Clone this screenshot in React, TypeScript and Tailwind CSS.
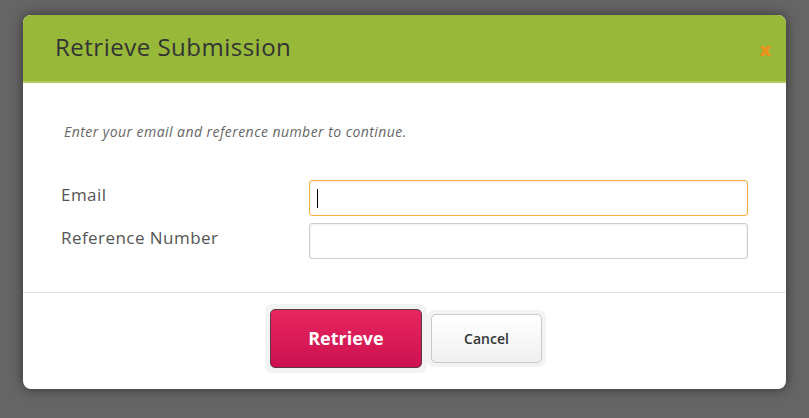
import React from 'react';

export default function App() {
  return (
    <div className="w-[809px] h-[418px] bg-[#656565] pt-[15px] pl-[23px] font-['Open_Sans',sans-serif]">
      <div className="w-[763px] h-[374px] bg-white rounded-[8px] overflow-hidden shadow-[0_0_12px_rgba(0,0,0,0.5)] flex flex-col">
        {/* Header */}
        <div className="h-[68px] bg-[#98b83a] border-b-2 border-[#b3cb5e] flex items-center justify-between pl-[32px] pr-[15px]">
          <h1 className="text-[24px] text-[#333] tracking-[0.5px] mt-[-3px]">Retrieve Submission</h1>
          <span className="text-[#f0901c] font-extrabold text-[18px] mt-[3px]">x</span>
        </div>

        {/* Body */}
        <div className="flex-1 flex flex-col">
          <p className="pl-[41px] mt-[38px] italic text-[14px] tracking-[0.45px] text-[#666]">
            Enter your email and reference number to continue.
          </p>
          <div className="mt-[38px] flex flex-col gap-[7px] pl-[38px] pr-[38px]">
            <div className="flex items-center">
              <label className="w-[248px] mb-[6px] text-[17px] tracking-[0.45px] text-[#555]">Email</label>
              <div className="flex-1 h-[36px] border border-[#f5b03c] rounded-[3px] bg-white shadow-[inset_0_1px_3px_rgba(0,0,0,0.08)] flex items-center pl-[7px]">
                <div className="w-[1px] h-[19px] bg-black" />
              </div>
            </div>
            <div className="flex items-center">
              <label className="w-[248px] mb-[6px] text-[17px] tracking-[0.45px] text-[#555]">Reference Number</label>
              <div className="flex-1 h-[36px] border border-[#ccc] rounded-[3px] bg-white shadow-[inset_0_1px_3px_rgba(0,0,0,0.08)]" />
            </div>
          </div>
          <div className="mt-[33px] border-t border-[#e2e2e2]" />
          <div className="flex items-center justify-center pt-[11px] pl-[2px]">
            <div className="p-[5px] bg-[#f3f3f3] rounded-[7px]">
              <button className="w-[152px] h-[59px] rounded-[5px] border border-[#5a3a42] bg-gradient-to-b from-[#e8255f] to-[#cc1050] text-white font-bold text-[18px]">
                Retrieve
              </button>
            </div>
            <div className="p-[4px] bg-[#f3f3f3] rounded-[7px]">
              <button className="w-[111px] h-[49px] rounded-[5px] border border-[#c8c8c8] bg-gradient-to-b from-white to-[#f0f0f0] text-[#333] font-semibold text-[14px]">
                Cancel
              </button>
            </div>
          </div>
        </div>
      </div>
    </div>
  );
}
